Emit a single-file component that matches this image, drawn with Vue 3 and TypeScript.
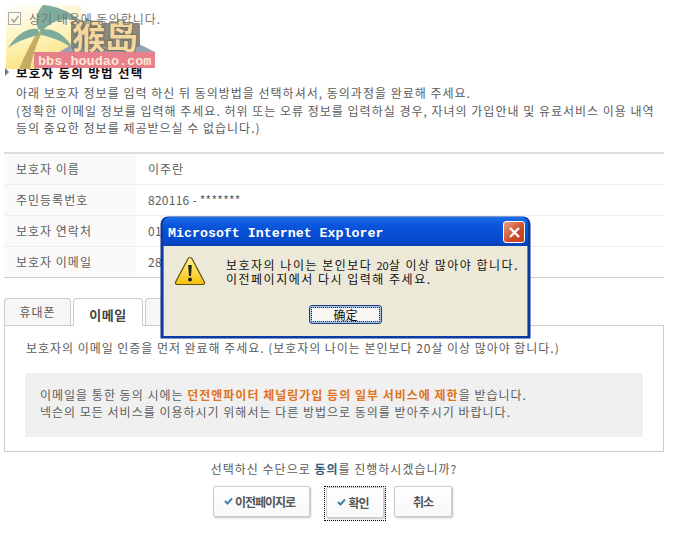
<script setup lang="ts">
type Row = { label: string; value: string };

const rows: Row[] = [
  { label: "보호자 이름", value: "이주란" },
  { label: "주민등록번호", value: "820116 - *******" },
  { label: "보호자 연락처", value: "01" },
  { label: "보호자 이메일", value: "28" },
];

const isDigits = (value: string) => /^\d/.test(value);
</script>

<template>
  <div class="page">
    <svg class="watermark" width="150" height="64" viewBox="0 0 150 64">
      <defs>
        <linearGradient id="sky" x1="0.2" y1="0" x2="0.5" y2="1">
          <stop offset="0" stop-color="#fffef6" />
          <stop offset="0.5" stop-color="#fdf3bd" />
          <stop offset="1" stop-color="#fbe27a" />
        </linearGradient>
      </defs>
      <path d="M1 0H76V47H30V64H1Z" fill="url(#sky)" />
      <path d="M14 64C20 50 26 38 33 26L37 27C31 40 27 52 25 64Z" fill="#c3ad62" />
      <path d="M33 24C24 22 12 28 3 43C13 36 24 32 34 30ZM33 24C30 14 32 7 38 0C50 1 66 6 75 16C62 12 48 14 37 26ZM35 25C46 22 60 28 68 44C58 36 46 32 36 30Z" fill="#7dab9c" />
      <path d="M54 47L68 39H134L150 47V50H54Z" fill="#98a3b6" />
      <rect x="66" y="18" width="69" height="24" fill="#8d8a7c" />
      <text x="100" y="44" text-anchor="middle" class="wm-cjk">猴岛</text>
      <rect x="29" y="47" width="121" height="16" fill="#e77f8c" />
      <text x="33" y="60" class="wm-url">bbs.houdao.com</text>
    </svg>

    <label class="agree">
      <span class="check">
        <svg width="10" height="10" viewBox="0 0 10 10"><path d="M1.5 5L4 8L8.5 2" fill="none" stroke="#9aa0a0" stroke-width="1.4" /></svg>
      </span>
      상기 내용에 동의합니다.
    </label>

    <h2 class="heading"><i class="arrow"></i>보호자 동의 방법 선택</h2>
    <p class="intro">
      아래 보호자 정보를 입력 하신 뒤 동의방법을 선택하셔서, 동의과정을 완료해 주세요.<br />
      (정확한 이메일 정보를 입력해 주세요. 허위 또는 오류 정보를 입력하실 경우, 자녀의 가입안내 및 유료서비스 이용 내역<br />
      등의 중요한 정보를 제공받으실 수 없습니다.)
    </p>

    <table class="info">
      <tbody>
        <tr v-for="row in rows" :key="row.label">
          <th>{{ row.label }}</th>
          <td :class="{ digits: isDigits(row.value) }">{{ row.value }}</td>
        </tr>
      </tbody>
    </table>

    <div class="tabs">
      <div class="tab">휴대폰</div>
      <div class="tab active">이메일</div>
      <div class="tab"></div>
    </div>
    <div class="panel">
      <p class="panel-text">보호자의 이메일 인증을 먼저 완료해 주세요. (보호자의 나이는 본인보다 20살 이상 많아야 합니다.)</p>
      <div class="notice">
        이메일을 통한 동의 시에는 <b>던전앤파이터 체널링가입 등의 일부 서비스에 제한</b>을 받습니다.<br />
        넥슨의 모든 서비스를 이용하시기 위해서는 다른 방법으로 동의를 받아주시기 바랍니다.
      </div>
    </div>

    <p class="question">선택하신 수단으로 <b>동의</b>를 진행하시겠습니까?</p>
    <div class="actions">
      <button class="btn wide">
        <svg class="tick" width="9" height="8" viewBox="0 0 9 8"><path d="M1 4L3.5 6.5L8 1.5" fill="none" stroke="#3f84ad" stroke-width="2" /></svg>이전페이지로
      </button>
      <span class="focus">
        <button class="btn ok">
          <svg class="tick" width="9" height="8" viewBox="0 0 9 8"><path d="M1 4L3.5 6.5L8 1.5" fill="none" stroke="#3f84ad" stroke-width="2" /></svg>확인
        </button>
      </span>
      <button class="btn cancel">취소</button>
    </div>

    <div class="dialog">
      <div class="titlebar">
        <span class="title">Microsoft Internet Explorer</span>
        <span class="close">
          <svg width="13" height="13" viewBox="0 0 13 13"><path d="M2 2L11 11M11 2L2 11" stroke="#fff" stroke-width="2.4" /></svg>
        </span>
      </div>
      <div class="dialog-body">
        <div class="dialog-main">
          <svg class="warn" width="32" height="32" viewBox="0 0 32 32">
            <defs>
              <linearGradient id="warnFill" x1="0" y1="0" x2="0" y2="1">
                <stop offset="0" stop-color="#fff58c" />
                <stop offset="1" stop-color="#f5c010" />
              </linearGradient>
            </defs>
            <path d="M16 2.5C17 2.5 17.6 3 18 3.8L30.4 27C31 28.3 30.2 29.5 28.8 29.5H3.2C1.8 29.5 1 28.3 1.6 27L14 3.8C14.4 3 15 2.5 16 2.5Z" fill="url(#warnFill)" stroke="#5f4c10" stroke-width="1.2" />
            <path d="M14.2 10H17.8L17 21H15Z" fill="#222" />
            <circle cx="16" cy="24.5" r="2" fill="#222" />
          </svg>
          <div class="dialog-text">
            보호자의 나이는 본인보다 <span class="num">20</span>살 이상 많아야 합니다.<br />
            이전페이지에서 다시 입력해 주세요.
          </div>
        </div>
        <button class="confirm">确定</button>
      </div>
    </div>
  </div>
</template>

<style>
html,
body {
  margin: 0;
  background: #fff;
}
</style>

<style scoped>
.page {
  position: relative;
  width: 689px;
  height: 549px;
  overflow: hidden;
  box-sizing: border-box;
  padding: 11px 25px 0 4px;
  font-family: "Noto Sans CJK KR", "Liberation Sans", sans-serif;
  font-size: 12px;
  letter-spacing: 1px;
  color: #5c5c5c;
}

.watermark {
  position: absolute;
  left: 5px;
  top: 5px;
}

.wm-cjk {
  font-family: "Noto Sans CJK SC", sans-serif;
  font-size: 33px;
  font-weight: 700;
  letter-spacing: 0;
  fill: #f3d79f;
  stroke: #77746a;
  stroke-width: 2.5;
  paint-order: stroke fill;
}

.wm-url {
  font-family: "Liberation Mono", monospace;
  font-size: 13.5px;
  font-weight: 700;
  letter-spacing: 0;
  fill: #fbe9d0;
}

.agree {
  position: relative;
  display: flex;
  align-items: center;
  gap: 8px;
  height: 15px;
  padding-left: 4px;
  color: #777;
}

.check {
  display: flex;
  align-items: center;
  justify-content: center;
  width: 11px;
  height: 11px;
  border: 1px solid #aaa;
}

.heading {
  display: flex;
  align-items: center;
  margin: 38px 0 0;
  height: 16px;
  font-size: 12.5px;
  font-weight: 700;
  letter-spacing: 1.3px;
  color: #111;
}

.arrow {
  width: 0;
  height: 0;
  margin: 0 7px 0 1px;
  border-left: 4px solid #777;
  border-top: 4px solid transparent;
  border-bottom: 4px solid transparent;
}

.intro {
  margin: 4px 0 0 12px;
  line-height: 17.5px;
  white-space: nowrap;
}

.info {
  width: 660px;
  margin-top: 15px;
  border-collapse: collapse;
  border-top: 2px solid #ddd;
  border-bottom: 1px solid #ccc;
}

.info tr + tr {
  border-top: 1px solid #eee;
}

.info th,
.info td {
  height: 30px;
  padding: 0 12px;
  font-weight: 400;
  text-align: left;
}

.info th {
  width: 108px;
  background: #fafafa;
}

.info td.digits {
  letter-spacing: 0.25px;
}

.tabs {
  display: flex;
  gap: 2px;
  height: 27px;
  margin-top: 20px;
}

.tab {
  position: relative;
  box-sizing: border-box;
  width: 67px;
  height: 27px;
  padding-top: 4px;
  background: #f6f6f6;
  border: 1px solid #ccc;
  border-bottom: none;
  border-radius: 4px 4px 0 0;
  text-align: center;
}

.tab.active {
  width: 70px;
  height: 28px;
  padding-top: 6px;
  z-index: 1;
  background: #fff;
  font-size: 13px;
  font-weight: 700;
  letter-spacing: 0.5px;
  color: #444;
}

.panel {
  box-sizing: border-box;
  width: 660px;
  height: 127px;
  padding: 13px 21px 0;
  border: 1px solid #ccc;
}

.panel-text {
  margin: 0;
  line-height: 17px;
  letter-spacing: 0.96px;
  white-space: nowrap;
}

.notice {
  width: 618px;
  height: 64px;
  box-sizing: border-box;
  margin: 17px 0 0 -1px;
  padding: 13px 15px 0;
  background: #f0f0f0;
  line-height: 17px;
  white-space: nowrap;
}

.notice b {
  color: #e0731a;
}

.question {
  margin: 8px 0 0;
  width: 660px;
  text-align: center;
  line-height: 17px;
}

.question b {
  color: #35607f;
}

.actions {
  display: flex;
  align-items: flex-start;
  margin: 9px 0 0 209px;
}

.btn {
  box-sizing: border-box;
  display: flex;
  align-items: center;
  justify-content: center;
  gap: 2px;
  height: 31px;
  padding: 0;
  background: linear-gradient(#fff, #f8f8f8);
  border: 1px solid #ccc;
  border-radius: 2px;
  box-shadow: 1px 1px 2px rgba(0, 0, 0, 0.25);
  font-family: inherit;
  font-size: 12px;
  font-weight: 700;
  letter-spacing: -1px;
  color: #555;
}

.tick {
  flex: none;
}

.wide {
  width: 97px;
  padding-right: 4px;
}

.focus {
  box-sizing: border-box;
  margin-left: 14px;
  padding: 0 1px 2px;
  border: 1px dotted #000;
  height: 35px;
}

.ok {
  width: 58px;
  padding-right: 4px;
}

.cancel {
  width: 58px;
  margin-left: 8px;
}

.dialog {
  position: absolute;
  left: 161px;
  top: 217px;
  box-sizing: border-box;
  width: 369px;
  height: 121px;
  background: #0a3fb0;
  border-radius: 7px 7px 0 0;
  border: 2px solid #0a3aa5;
  border-top: none;
  box-shadow: 0 0 0 0.5px #083090;
  letter-spacing: 0;
}

.titlebar {
  display: flex;
  align-items: center;
  justify-content: space-between;
  height: 29px;
  padding: 0 3px 0 5px;
  background: linear-gradient(#1a6ee8 0, #0a55dc 30%, #0548c8 85%, #0a3fb0 100%);
  border-radius: 7px 7px 0 0;
}

.title {
  padding-top: 3px;
  font-family: "Liberation Mono", monospace;
  font-size: 13.3px;
  font-weight: 700;
  color: #fff;
  white-space: nowrap;
}

.close {
  display: flex;
  align-items: center;
  justify-content: center;
  width: 20px;
  height: 20px;
  margin-top: 1px;
  background: linear-gradient(135deg, #e8a088, #cd4a28 60%, #c24020);
  border: 1px solid #fff;
  border-radius: 3px;
}

.dialog-body {
  box-sizing: border-box;
  height: 90px;
  padding: 0 0 0 10px;
  background: #ece9d8;
  border-left: 1px solid #5a86e0;
  border-right: 1px solid #5a86e0;
}

.dialog-main {
  display: flex;
  height: 59px;
}

.warn {
  flex: none;
  margin-top: 9px;
}

.dialog-text {
  margin: 12px 0 0 20px;
  font-size: 12px;
  line-height: 13px;
  letter-spacing: 1.5px;
  color: #111;
  white-space: nowrap;
}

.num {
  font-size: 11px;
  letter-spacing: 0;
}

.confirm {
  display: block;
  box-sizing: border-box;
  width: 73px;
  height: 19px;
  margin: 0 0 0 135px;
  padding: 0;
  background: #f8f7f2;
  border: 1px solid #1c3f76;
  border-radius: 3px;
  outline: 1px dotted #333;
  outline-offset: -3px;
  box-shadow: inset 0 0 0 2px #a9c3e8;
  font-family: "Noto Sans CJK SC", sans-serif;
  font-size: 12px;
  line-height: 15px;
  color: #111;
}
</style>
